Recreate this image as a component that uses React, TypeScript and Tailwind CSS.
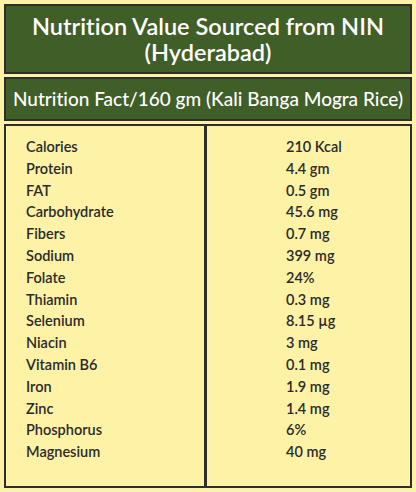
import React from 'react';

const rows = [
  ['Calories', '210 Kcal'],
  ['Protein', '4.4 gm'],
  ['FAT', '0.5 gm'],
  ['Carbohydrate', '45.6 mg'],
  ['Fibers', '0.7 mg'],
  ['Sodium', '399 mg'],
  ['Folate', '24%'],
  ['Thiamin', '0.3 mg'],
  ['Selenium', '8.15 µg'],
  ['Niacin', '3 mg'],
  ['Vitamin B6', '0.1 mg'],
  ['Iron', '1.9 mg'],
  ['Zinc', '1.4 mg'],
  ['Phosphorus', '6%'],
  ['Magnesium', '40 mg'],
];

const App: React.FC = () => {
  return (
    <div className="w-[416px] h-[492px] bg-[#fdf2a6] p-[4px] flex flex-col gap-[3px] font-['Lato','Liberation_Sans',sans-serif] [font-variant-ligatures:none]">
      {/* Title */}
      <div className="h-[70px] bg-[#3f5e28] border-2 border-[#2e2e2e] flex items-center justify-center text-center text-white text-[23.5px] leading-[26px] font-semibold">
        <span>
          Nutrition Value Sourced from NIN
          <br />
          (Hyderabad)
        </span>
      </div>

      {/* Subtitle */}
      <div className="h-[44px] bg-[#3f5e28] border-2 border-[#2e2e2e] flex items-center justify-center text-white text-[19px] font-medium">
        Nutrition Fact/160 gm (Kali Banga Mogra Rice)
      </div>

      {/* Table */}
      <div className="flex-1 border-2 border-[#2e2e2e] grid grid-cols-[201px_1fr] text-[14.5px] font-semibold text-[#2b2b2b] leading-[21.8px]">
        <div className="border-r-[3px] border-[#2e2e2e] pl-[20px] pt-[10px]">
          {rows.map(([label]) => (
            <div key={label}>{label}</div>
          ))}
        </div>
        <div className="pl-[79px] pt-[10px]">
          {rows.map(([label, value]) => (
            <div key={label}>{value}</div>
          ))}
        </div>
      </div>
    </div>
  );
};

export default App;
